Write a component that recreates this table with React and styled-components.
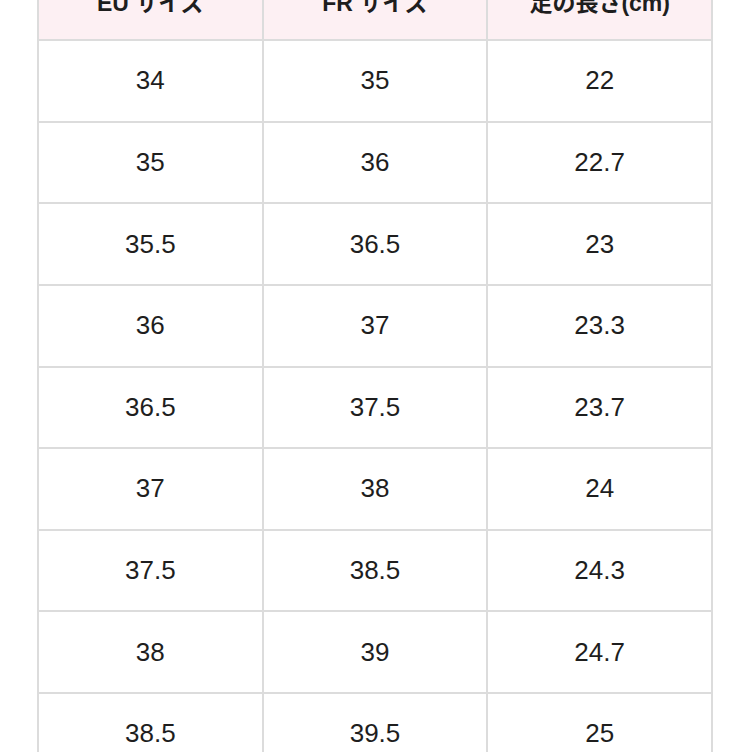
import React from 'react';
import styled, { createGlobalStyle } from 'styled-components';

const GlobalStyle = createGlobalStyle`
  html, body {
    margin: 0;
    padding: 0;
    background: #fff;
    overflow: hidden;
  }
  body {
    font-family: "Liberation Sans", "Noto Sans CJK JP", sans-serif;
    color: #222;
  }
`;

const Page = styled.div`
  padding-left: 37px;
  height: 752px;
  overflow: hidden;
`;

const Table = styled.div`
  width: 676px;
  box-sizing: border-box;
  margin-top: -42.6px;
  display: grid;
  grid-template-columns: repeat(3, 1fr);
  grid-auto-rows: 79.625px;
  gap: 2px;
  border: 2px solid #dcdcdc;
  background: #dcdcdc;
`;

const Cell = styled.div`
  display: flex;
  align-items: center;
  justify-content: center;
  padding-top: ${p => (p.head ? '3px' : '0')};
  box-sizing: border-box;
  background: ${p => (p.head ? '#fdf0f3' : '#fff')};
  font-size: ${p => (p.head ? '23px' : '26px')};
  font-weight: ${p => (p.head ? 700 : 400)};
  color: #1e1e1e;
`;

const headers = ['EU サイズ', 'FR サイズ', '足の長さ(cm)'];

const rows = [
  ['34', '35', '22'],
  ['35', '36', '22.7'],
  ['35.5', '36.5', '23'],
  ['36', '37', '23.3'],
  ['36.5', '37.5', '23.7'],
  ['37', '38', '24'],
  ['37.5', '38.5', '24.3'],
  ['38', '39', '24.7'],
  ['38.5', '39.5', '25'],
  ['39', '40', '25.3'],
];

const App = () => (
  <Page>
    <GlobalStyle />
    <Table>
      {headers.map(h => (
        <Cell head key={h}>{h}</Cell>
      ))}
      {rows.map((row, i) =>
        row.map((v, j) => <Cell key={`${i}-${j}`}>{v}</Cell>)
      )}
    </Table>
  </Page>
);

export default App;
